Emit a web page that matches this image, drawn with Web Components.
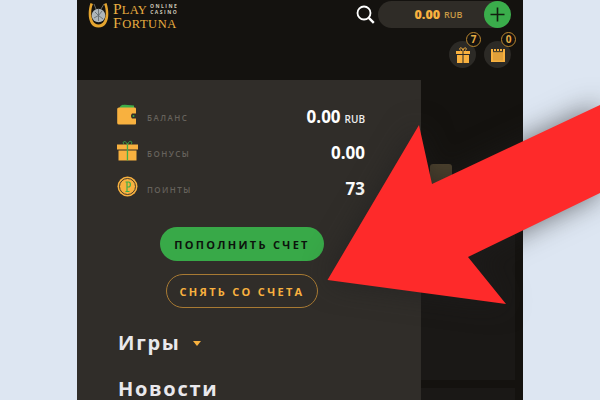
<!DOCTYPE html>
<html><head><meta charset="utf-8"><style>
html,body{margin:0;padding:0;width:600px;height:400px;overflow:hidden;background:#dde6f2;font-family:"Open Sans",sans-serif}
</style></head><body>
<pf-page></pf-page>
<script>
const ICONS={
gift:`<svg viewBox="0 0 21 21" width="21" height="21"><path d="M7 4.500C4.500 1 9 .3 10.500 4.500 12-.3 16.500 1 14 4.500" fill="none" stroke="#3fae49" stroke-width="1"/><rect x="0" y="4.500" width="21" height="5" fill="#f8b13f"/><rect x="1.500" y="10.500" width="18" height="10" fill="#f8b13f"/><rect x="9.800" y="4.500" width="1.300" height="16" fill="#3fae49"/></svg>`,
wallet:`<svg viewBox="0 0 21 21" width="21" height="21"><path d="M2 5C3 1 5 1 8 .8L17 1.500 17 5Z" fill="#3fae49"/><path d="M2 3.500H18Q19 3.500 19 5V19.500Q19 20.500 18 20.500H2Q.2 20.500 .2 19V5Q.2 3.500 2 3.500Z" fill="#f8b13f"/><path d="M15 9.500H21V14.500H15Q13 12 15 9.500Z" fill="#302d29"/><circle cx="16.500" cy="12" r="1" fill="#3fae49"/></svg>`,
coin:`<svg viewBox="0 0 21 21" width="21" height="21"><circle cx="10.500" cy="10.500" r="10" fill="#f8b13f"/><circle cx="10.500" cy="10.500" r="8" fill="none" stroke="#302d29" stroke-width=".9"/><path d="M8.500 15.500H12.500M10 15.500V6M8.500 6H11.500C14 6 14 11 11.500 11H10" fill="none" stroke="#3fae49" stroke-width="1.200"/></svg>`,
horseshoe:`<svg viewBox="0 0 21 25" width="21" height="25"><circle cx="10.500" cy="12.500" r="6.800" fill="#aeb6ba"/><path d="M7 9l3.500 3.500L14 8M6 15l4.500-2.500L15 16M10.500 6v12" stroke="#5c6468" fill="none" stroke-width=".8"/><path d="M8 6L6 1M13 6l3-5" stroke="#8d8d84" stroke-width=".7"/><path d="M2.500 0C-1 10 0 24.500 10.500 24.500S22 10 18.500 0L16 1C19.500 9 18 21.500 10.500 21.500S1.500 9 5 1Z" fill="#e5a52f"/></svg>`
};
function def(name,css,html){customElements.define(name,class extends HTMLElement{constructor(){super();const s=this.attachShadow({mode:'open'});s.innerHTML=`<style>${css}</style>${typeof html==='function'?html(this):html}`}})}

def('pf-logo',`:host{display:flex;gap:4px;align-items:flex-start;padding:2px 0 0 11px;color:#e9ae41;font-family:"Liberation Serif",serif}
svg{display:block;margin-top:1px}
.t{display:flex;flex-direction:column}.r{display:flex;align-items:flex-start;gap:3px}
.a,.b{display:block;font-size:12.500px;line-height:14px;height:14px;letter-spacing:.55px;white-space:nowrap}.a{letter-spacing:.2px}.a u,.b u{text-decoration:none;font-size:15.500px}
.o{font:700 5px/5.500px "Open Sans",sans-serif;color:#cfc9b9;letter-spacing:1.500px;text-align:center;margin-top:2px}`,
`${ICONS.horseshoe}<div class="t"><div class="r"><span class="a"><u>P</u>LAY</span><span class="o">ONLINE<br>CASINO</span></div><span class="b"><u>F</u>ORTUNA</span></div>`);

def('pf-balance',`:host{display:flex;align-items:center;justify-content:center;gap:3px;position:relative;width:133px;height:27px;box-sizing:border-box;border-radius:14px;background:#2f2c27;color:#f8b13f;padding:0 28px 0 16px;font-weight:700}
b{font-size:12.500px}span{font-size:9px;font-weight:600;color:#c99a45;margin-left:1px}
i{position:absolute;right:0;top:0;width:27px;height:27px;border-radius:50%;background:#3aad4b;display:flex;align-items:center;justify-content:center}`,
`<b>0.00</b><span>RUB</span><i><svg width="15" height="15" viewBox="0 0 15 15"><path d="M7.500 .5V14.500M.5 7.500H14.500" stroke="#12200f" stroke-width="1.600"/></svg></i>`);

def('pf-round',`:host{display:flex;position:relative;width:27px;height:27px;border-radius:50%;background:#2c2a26;align-items:center;justify-content:center}
em{position:absolute;right:-5px;top:-9px;width:13px;height:13px;border:1px solid #b9852f;border-radius:50%;background:#14120f;color:#e5ab44;font:normal 700 10px/13px "Open Sans",sans-serif;text-align:center}`,
el=>`<slot></slot><em>${el.getAttribute('n')}</em>`);

def('pf-header',`:host{display:flex;flex:none;justify-content:space-between;height:80px;background:#14120f;box-sizing:border-box}
.right{display:flex;flex-direction:column;align-items:flex-end;padding:1px 12px 0 0;gap:13px}
.top{display:flex;align-items:center;gap:3px}.icons{display:flex;gap:8px}svg{display:block}`,
`<pf-logo></pf-logo><div class="right"><div class="top"><svg width="19" height="19" viewBox="0 0 19 19"><circle cx="8" cy="8" r="6.500" fill="none" stroke="#fff" stroke-width="1.800"/><path d="M12.800 12.800L17.800 17.800" stroke="#fff" stroke-width="2.400"/></svg><pf-balance></pf-balance></div>
<div class="icons"><pf-round n="7"><svg width="14" height="16" viewBox="0 0 14 16"><path d="M4.500 3.500C2 .3 6.500-.5 7 3.500 7.500-.5 12 .3 9.500 3.500" fill="none" stroke="#f8b13f"/><path d="M0 4H6.500V7H0ZM7.500 4H14V7H7.500ZM1 8H6.500V16H1ZM7.500 8H13V16H7.500Z" fill="#f8b13f"/></svg></pf-round>
<pf-round n="0"><svg width="16" height="15" viewBox="0 0 16 15"><path d="M1 2H15V15H1Z" fill="#f8b13f"/><path d="M3 5.500H13V13.500H3Z" fill="#e1a03a"/><path d="M3.500 0V4M6.500 0V4M9.500 0V4M12.500 0V4" stroke="#2c2a26" stroke-width="1"/><path d="M3 4.700H13" stroke="#2c2a26"/></svg></pf-round></div></div>`);

def('pf-row',`:host{display:grid;flex:none;grid-template-columns:21px 1fr auto;align-items:center;column-gap:9px;height:36px}
.l{font-size:8px;font-weight:600;letter-spacing:1.450px;color:#66625c}.v{color:#fff;font-size:17px;font-weight:700;line-height:20px}
.u{font-size:10px;font-weight:600;margin-left:4px;color:#efefef}svg{display:block}`,
el=>`<slot name="i"></slot><span class="l">${el.getAttribute('label')}</span><span><span class="v">${el.getAttribute('value')}</span>${el.hasAttribute('unit')?`<span class="u">${el.getAttribute('unit')}</span>`:''}</span>`);

def('pf-button',`:host{display:flex;flex:none;align-items:center;justify-content:center;box-sizing:border-box;border-radius:17px;height:34px;font-size:11px;font-weight:700;letter-spacing:2.300px;white-space:nowrap}
:host([kind=fill]){width:164px;background:#38a948;color:#0c130c}
:host([kind=line]){width:152px;border:1px solid #a87a33;color:#f8b13f}`,`<slot></slot>`);

def('pf-drawer',`:host{display:flex;flex-direction:column;width:344px;height:320px;box-sizing:border-box;background:#302d29;padding:19px 56px 0 40px;overflow:hidden}
.btns{display:flex;flex:none;flex-direction:column;align-items:center;gap:13px;margin:20px 0 0 2px}
.m{flex:none;color:#e9e8ec;font-size:20px;font-weight:700;letter-spacing:1.700px;line-height:28px;margin-left:1px}
.g{display:flex;align-items:center;gap:13px;margin-top:21px}.n{margin-top:18px}
.c{width:0;height:0;border:4px solid transparent;border-top:5px solid #f8b13f;border-bottom:0}`,
`<pf-row label="БАЛАНС" value="0.00" unit="RUB"><span slot="i">${ICONS.wallet}</span></pf-row>
<pf-row label="БОНУСЫ" value="0.00"><span slot="i">${ICONS.gift}</span></pf-row>
<pf-row label="ПОИНТЫ" value="73"><span slot="i">${ICONS.coin}</span></pf-row>
<div class="btns"><pf-button kind="fill">ПОПОЛНИТЬ СЧЕТ</pf-button><pf-button kind="line">СНЯТЬ СО СЧЕТА</pf-button></div>
<div class="m g"><span>Игры</span><i class="c"></i></div><div class="m n">Новости</div>`);

def('pf-side',`:host{display:flex;flex-direction:column;flex:1;background:#14120f;padding:84px 8px 0 0;box-sizing:border-box;height:320px}
.c{margin-left:9px;width:22px;height:23px;border-radius:3px 3px 0 0;background:#50442e}.g{margin-left:9px;width:22px;height:6px;background:#1c3a1e}
.p{flex:0 0 148px;margin-top:39px;background:#1a1816}.q{flex:1;margin-top:8px;background:#1a1816}`,
`<div class="c"></div><div class="g"></div><div class="p"></div><div class="q"></div>`);

def('pf-arrow',`:host{display:block;position:absolute;inset:0;pointer-events:none}
svg{display:block;filter:drop-shadow(0 0 14px rgba(30,30,30,.6))}`,
`<svg width="600" height="400" viewBox="0 0 600 400"><path d="M327.500 280L419 125 432 184 600 105V193L468 257 506 304Z" fill="#fe2a2a"/></svg>`);

def('pf-page',`:host{display:block;position:relative;width:600px;height:400px;overflow:hidden}
.f{margin-left:77px;width:446px;height:400px;display:flex;flex-direction:column}.b{display:flex}`,
`<div class="f"><pf-header></pf-header><div class="b"><pf-drawer></pf-drawer><pf-side></pf-side></div></div><pf-arrow></pf-arrow>`);
</script></body></html>
